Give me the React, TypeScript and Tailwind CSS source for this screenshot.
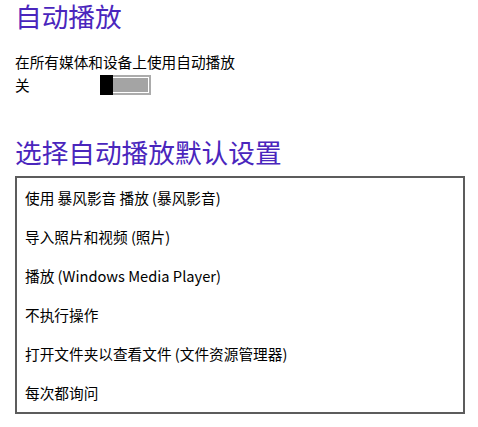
import React from "react";

const items = [
  "使用 暴风影音 播放 (暴风影音)",
  "导入照片和视频 (照片)",
  "播放 (Windows Media Player)",
  "不执行操作",
  "打开文件夹以查看文件 (文件资源管理器)",
  "每次都询问",
];

export default function App() {
  return (
    <div
      className="w-[478px] h-[427px] bg-white text-black pl-[15px] overflow-hidden"
      style={{ fontFamily: '"Noto Sans CJK SC", "Noto Sans", sans-serif' }}
    >
      <h1 className="text-[26.67px] leading-[32px] text-[#4a26bd] font-normal">自动播放</h1>
      <div className="mt-[20px] text-[14.67px] leading-[20px]">在所有媒体和设备上使用自动播放</div>
      <div className="mt-[3px] flex items-center h-[20px]">
        <span className="w-[85px] text-[14.67px] leading-[20px]">关</span>
        <div className="relative w-[51px] h-[20px] border-2 border-[#ababab] bg-white p-[1px]">
          <div className="w-full h-full bg-[#a4a4a4]" />
          <div className="absolute left-[-2px] top-[-2px] w-[13px] h-[20px] bg-black" />
        </div>
      </div>
      <h2 className="mt-[41px] text-[26.67px] leading-[32px] text-[#4a26bd] font-normal">选择自动播放默认设置</h2>
      <div className="mt-[8px] w-[450px] border-2 border-[#5c5c5c] bg-white">
        {items.map((t) => (
          <div key={t} className="h-[39px] flex items-center pl-[8px] text-[14.67px]">
            {t}
          </div>
        ))}
      </div>
    </div>
  );
}
